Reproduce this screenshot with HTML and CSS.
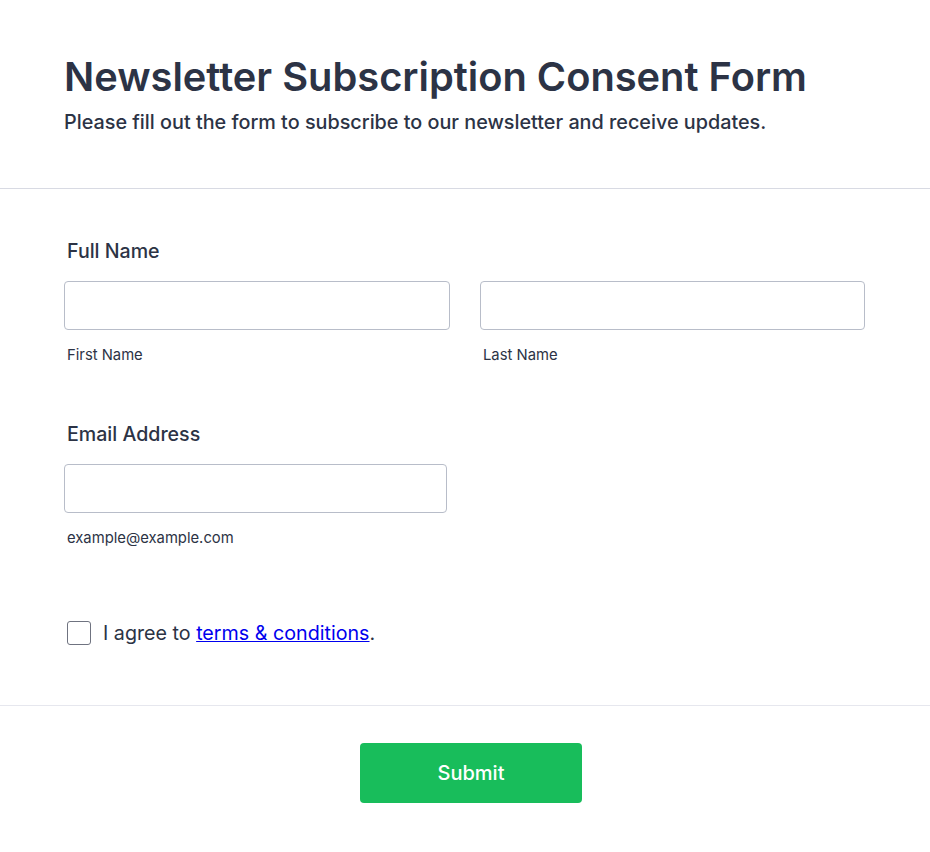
FILE: index.html
```html
<!DOCTYPE html>
<html lang="en">
<head>
<meta charset="utf-8">
<title>Newsletter Subscription Consent Form</title>
<link rel="stylesheet" href="styles.css">
</head>
<body>
<form class="form">
  <header class="form-header">
    <h1 class="form-title">Newsletter Subscription Consent Form</h1>
    <p class="form-subtitle">Please fill out the form to subscribe to our newsletter and receive updates.</p>
  </header>
  <section class="form-body">
    <div class="field">
      <label class="field-label">Full Name</label>
      <div class="name-row">
        <div class="sub-field">
          <input class="text-input" type="text">
          <span class="sub-label">First Name</span>
        </div>
        <div class="sub-field">
          <input class="text-input" type="text">
          <span class="sub-label">Last Name</span>
        </div>
      </div>
    </div>
    <div class="field field-email">
      <label class="field-label">Email Address</label>
      <div class="sub-field email-field">
        <input class="text-input" type="email">
        <span class="sub-label">example@example.com</span>
      </div>
    </div>
    <div class="consent">
      <span class="checkbox"></span>
      <span class="consent-text">I agree to <a href="#" class="consent-link">terms &amp; conditions</a>.</span>
    </div>
  </section>
  <footer class="form-footer">
    <button type="button" class="submit-btn">Submit</button>
  </footer>
</form>
</body>
</html>
```
FILE: styles.css
```css
* { box-sizing: border-box; }
html, body { margin: 0; padding: 0; background: #fff; }
body {
  font-family: Inter, "Noto Sans", sans-serif;
  color: #2c3345;
}
.form { width: 930px; }
.form-header {
  padding: 53px 64px 52px;
  border-bottom: 1px solid #d8dae3;
}
.form-title {
  margin: 0;
  font-size: 39.8px;
  font-weight: 600;
  line-height: 48px;
  color: #2c3345;
}
.form-subtitle {
  margin: 7px 0 0;
  font-size: 19.8px;
  font-weight: 500;
  line-height: 28px;
  color: #2c3345;
}
.form-body {
  padding: 50px 64px 60px;
  border-bottom: 1px solid #e6e7ee;
}
.field-label {
  display: block;
  padding-left: 3px;
  font-size: 19.6px;
  font-weight: 500;
  line-height: 24px;
  margin-bottom: 18px;
}
.name-row {
  display: grid;
  grid-template-columns: 386px 385px;
  column-gap: 30px;
}
.sub-field { display: flex; flex-direction: column; }
.email-field { width: 383px; }
.text-input {
  display: block;
  width: 100%;
  height: 49px;
  border: 1px solid #b8bdc9;
  border-radius: 4px;
  background: #fff;
  margin: 0;
  padding: 0 10px;
  font: inherit;
}
.sub-label {
  display: block;
  padding-left: 3px;
  margin-top: 16px;
  font-size: 14.8px;
  line-height: 18px;
  color: #2c3345;
}
.field-email { margin-top: 58px; }
.consent {
  display: flex;
  align-items: center;
  gap: 12px;
  margin-top: 74px;
  padding-left: 3px;
}
.checkbox {
  width: 24px;
  height: 24px;
  border: 1px solid #6f7380;
  border-radius: 3px;
  background: #fff;
  flex: none;
}
.consent-text {
  font-size: 19.7px;
  line-height: 24px;
  color: #2c3345;
}
.consent-link { color: #0000ee; text-decoration: underline; }
.form-footer {
  display: flex;
  justify-content: center;
  padding: 37px 0 50px 12px;
}
.submit-btn {
  width: 222px;
  height: 60px;
  border: 0;
  border-radius: 4px;
  background: #18bd5b;
  color: #fff;
  font-family: Inter, "Noto Sans", sans-serif;
  font-size: 20px;
  font-weight: 500;
  cursor: pointer;
}
```
